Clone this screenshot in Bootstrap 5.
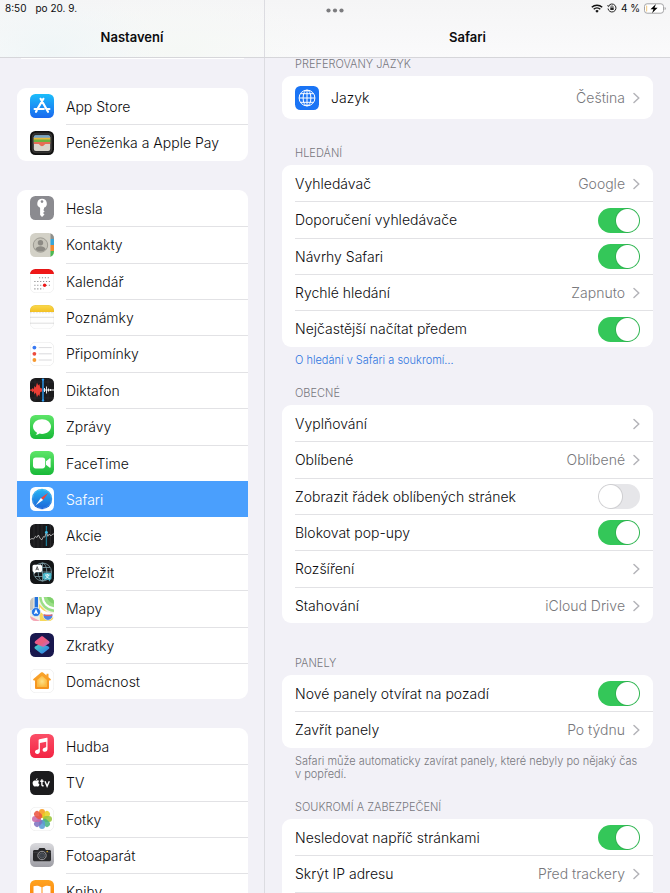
<!DOCTYPE html>
<html lang="cs">
<head>
<meta charset="utf-8">
<meta name="viewport" content="width=device-width, initial-scale=1">
<title>Nastavení</title>
<link href="https://cdn.jsdelivr.net/npm/bootstrap@5.3.0/dist/css/bootstrap.min.css" rel="stylesheet">
<style>
  body { background: #f2f1f7; color: #0c0c0e; font-family: Inter, "Noto Sans", sans-serif; font-size: 14px; line-height: 20px; }
  a { text-decoration: none; }
  .top-bar { height: 58px; background: radial-gradient(ellipse 110px 60px at 50px 50px, #eff6f7, transparent), radial-gradient(ellipse 140px 60px at 180px 50px, #f5f8f5, transparent), linear-gradient(#f5f5f6, #fafafb); border-bottom: 1px solid #d6d6da; }
  .top-bar h1, .top-bar h2 { font-size: 13px; line-height: 20px; font-weight: 600; padding-top: 27px; }
  .status { font-size: 10px; line-height: 16px; z-index: 2; }
  .status-time { margin-left: 5px; }
  .status-date { margin-left: 9px; }
  .side-pane { width: 265px; border-right: 1px solid #dcdce1; }
  .side-scroll { padding: 0 16px 0 17px; }
  .main-scroll { padding: 0 17px; }
  .peek { height: 1px; background: #fff; margin: 0 4px 29px; }
  .set-list { display: grid; grid-auto-rows: 36px 37px 36px 36px 37px; border-radius: 9px; overflow: hidden; background: #fff; font-weight: 300; }
  .side-scroll .set-list { margin-bottom: 29px; }
  .tall-list { grid-auto-rows: 43px; }
  .set-row { display: flex; align-items: center; padding: 0 0 0 13px; border: 0; background: transparent; color: inherit; font-weight: inherit; text-align: left; min-width: 0; }
  .set-row svg.app { width: 24px; height: 24px; flex: none; margin-right: 12px; }
  .row-body { flex: 1; height: 100%; min-width: 0; display: flex; align-items: center; justify-content: space-between; border-top: 1px solid #e2e2e5; padding-right: 13px; white-space: nowrap; }
  .set-row:first-child .row-body { border-top-color: transparent; }
  .set-row.chosen { background: #4a9ffd; color: #fff; }
  .set-row.chosen .row-body, .set-row.chosen + .set-row .row-body { border-top-color: transparent; }
  .row-value { color: #77777b; display: flex; align-items: center; gap: 8px; }
  .row-value svg { width: 7px; height: 12px; fill: none; stroke: #b4b4b9; stroke-width: 1.5; stroke-linecap: round; stroke-linejoin: round; }
  .group-title, .group-note { font-size: 11px; line-height: 13px; color: #77777d; padding: 0 13px; margin: 0; font-weight: 300; }
  .group-title { margin: 28px 0 5px; }
  .main-scroll > .group-title:first-child { margin-top: 0; }
  .group-title.after-list { margin-top: 34px; }
  .group-note { margin-top: 7px; padding-right: 0; }
  .group-note + .group-title { margin-top: 20px; }
  .group-note a { color: #2f76e0; }
  .form-check-input.toggle { float: none; margin: 0; width: 42px; height: 25px; border: 0; border-radius: 13px; background-color: #e6e6e9; background-image: radial-gradient(circle, #fff 11px, rgba(0,0,0,.10) 12px, transparent 13px); background-size: 25px 25px; background-position: left center; background-repeat: no-repeat; }
  .form-check-input.toggle:checked { background-color: #34c759; background-image: radial-gradient(circle, #fff 11px, rgba(0,0,0,.10) 12px, transparent 13px); background-position: right center; }
</style>
<script src="https://cdn.jsdelivr.net/npm/bootstrap@5.3.0/dist/js/bootstrap.bundle.min.js"></script>
</head>
<body class="vh-100 overflow-hidden d-flex flex-column">
<svg width="0" height="0" class="position-absolute" aria-hidden="true">
  <defs>
    <linearGradient id="gStore" x2="0" y2="1"><stop stop-color="#1bbdfb"/><stop offset="1" stop-color="#1a68ef"/></linearGradient>
    <linearGradient id="gGreen" x2="0" y2="1"><stop stop-color="#5de568"/><stop offset="1" stop-color="#18b938"/></linearGradient>
    <linearGradient id="gYellow" x2="0" y2="1"><stop stop-color="#fbd94e"/><stop offset="1" stop-color="#f3c022"/></linearGradient>
    <linearGradient id="gSafari" x2="0" y2="1"><stop stop-color="#28b6f4"/><stop offset="1" stop-color="#1b64d8"/></linearGradient>
    <linearGradient id="gMusic" x2="0" y2="1"><stop stop-color="#fb4f67"/><stop offset="1" stop-color="#f32443"/></linearGradient>
    <linearGradient id="gCam" x2="0" y2="1"><stop stop-color="#dadade"/><stop offset="1" stop-color="#9d9da4"/></linearGradient>
    <linearGradient id="gHome" x2="0" y2="1"><stop stop-color="#f9a52d"/><stop offset="1" stop-color="#f5921d"/></linearGradient>
    <radialGradient id="gGlow"><stop stop-color="#fde28a"/><stop offset="1" stop-color="#fbb940"/></radialGradient>
    <linearGradient id="gTop" x1="0" y1="0" x2="1" y2="1"><stop stop-color="#f0509a"/><stop offset=".55" stop-color="#e9607b"/><stop offset="1" stop-color="#b86be0"/></linearGradient>
    <linearGradient id="gBot" x1="0" y1="0" x2="1" y2="1"><stop stop-color="#4ad9c0"/><stop offset="1" stop-color="#2f74ea"/></linearGradient>
    <linearGradient id="gBooks" x2="0" y2="1"><stop stop-color="#ffa31f"/><stop offset="1" stop-color="#fb7d08"/></linearGradient>
    <clipPath id="cut"><rect width="24" height="24" rx="5.4"/></clipPath>
    <symbol id="chev" viewBox="0 0 7 12"><path d="M1 1.500 5.800 6 1 10.500"/></symbol>
  </defs>
</svg>

<div class="status position-absolute top-0 start-0 w-100 d-flex justify-content-between">
  <div><span class="status-time">8:50</span><span class="status-date">po 20. 9.</span></div>
  <button type="button" class="btn border-0 p-0 position-absolute start-50 translate-middle-x d-flex pt-2" aria-label="Více oken">
    <svg width="18" height="5" viewBox="0 0 18 5" fill="#7c7c7f"><circle cx="2.500" cy="2.500" r="2.100"/><circle cx="9" cy="2.500" r="2.100"/><circle cx="15.500" cy="2.500" r="2.100"/></svg>
  </button>
  <div class="d-flex align-items-center pe-1">
    <svg class="me-1" width="12" height="9" viewBox="0 0 12 9" fill="none" stroke="#111" stroke-width="1.500"><path d="M.8 3.300a7.500 7.500 0 0 1 10.400 0M2.700 5.300a4.700 4.700 0 0 1 6.600 0"/><path d="M6 8.700 4.300 6.900a2.500 2.500 0 0 1 3.400 0z" fill="#111" stroke="none"/></svg>
    <svg class="me-1" width="10" height="10" viewBox="0 0 10 10" fill="none" stroke="#222" stroke-width="1"><path d="M1.500 3A4 4 0 1 1 1 5.500"/><path d="M.3 2.500 1.500 3.700 2.800 2.400"/><path d="M3.900 4.700V3.900a1.100 1.100 0 0 1 2.200 0v.8" stroke-width=".7"/><rect x="3.300" y="4.500" width="3.400" height="2.400" rx=".5" fill="#222" stroke="none"/></svg>
    <span>4 %</span>
    <svg class="ms-1" width="22" height="11" viewBox="0 0 22 11"><rect x=".5" y=".8" width="19" height="9.400" rx="2.600" fill="#fff" stroke="#a4a4a6"/><rect x="2" y="2.400" width="1.200" height="6.200" rx=".5" fill="#f2cf91"/><path d="M20.600 4v3c.8-.2 1.200-.8 1.200-1.500s-.4-1.300-1.200-1.500z" fill="#a4a4a6"/><path d="M12 1 6.500 6.200h3L8 10.200l5.600-5.400h-3.100z" fill="#000"/></svg>
  </div>
</div>

<header class="top-bar d-flex flex-shrink-0 text-center">
  <div class="side-pane flex-shrink-0"><h1 class="m-0">Nastavení</h1></div>
  <div class="flex-grow-1"><h2 class="m-0">Safari</h2></div>
</header>

<div class="d-flex flex-grow-1 overflow-hidden">
  <nav class="side-pane side-scroll flex-shrink-0 overflow-hidden" aria-label="Nastavení">
    <div class="peek"></div>
    <div class="set-list">
      <a class="set-row" href="#"><svg class="app" viewBox="0 0 24 24"><rect width="24" height="24" rx="5.400" fill="url(#gStore)"/><g stroke="#fff" stroke-width="2.200" stroke-linecap="round"><path d="M13.400 4.800 7.900 14.200M10.600 4.800l7.400 13M4.600 15h9.200M16.800 15h2.600M6.700 16.600l-.7 1.200"/></g></svg><span class="row-body">App Store</span></a>
      <a class="set-row" href="#"><svg class="app" viewBox="0 0 24 24"><rect width="24" height="24" rx="5.400" fill="#111"/><rect x="2.200" y="2.200" width="19.600" height="19.600" rx="3.600" fill="#2a2a2a" stroke="#55504a" stroke-width=".5"/><rect x="3.800" y="4.500" width="16.400" height="15.500" rx="2" fill="#d9d5cb"/><path d="M3.800 7.200V6a1.800 1.800 0 0 1 1.800-1.800h12.800A1.800 1.800 0 0 1 20.200 6v1.200z" fill="#75a5c8"/><path d="M3.800 6.700h16.400v2.500H3.800z" fill="#e8b63c"/><path d="M3.800 8.400h16.400v3H3.800z" fill="#6bb33f"/><path d="M3.800 11h16.400v1.900H16c-.9 0-1.300.5-1.800 1.100-.5.700-1.200 1.200-2.200 1.200s-1.700-.5-2.200-1.200c-.5-.6-.9-1.100-1.800-1.100H3.800z" fill="#e66d55"/></svg><span class="row-body">Peněženka a Apple Pay</span></a>
    </div>

    <div class="set-list">
      <a class="set-row" href="#"><svg class="app" viewBox="0 0 24 24"><rect width="24" height="24" rx="5.400" fill="#8b8b90"/><path d="M12 2.800a4.700 4.700 0 0 0-1.900 9v7.300l1.900 2 2.500-2.500-1.500-1.500 1.600-1.600-1.400-1.400.8-.9v-1.400A4.700 4.700 0 0 0 12 2.800z" fill="#fff"/><circle cx="12" cy="5.600" r="1.300" fill="#8b8b90"/></svg><span class="row-body">Hesla</span></a>
      <a class="set-row" href="#"><svg class="app" viewBox="0 0 24 24"><g clip-path="url(#cut)"><path d="M0 0h24v24H0z" fill="#d3d1c7"/><path d="M20.500 0H24v6h-3.500z" fill="#8f8f8b"/><path d="M20.500 6H24v6h-3.500z" fill="#38a5d8"/><path d="M20.500 12H24v6h-3.500z" fill="#f18a31"/><path d="M20.500 18H24v6h-3.500z" fill="#4cb953"/></g><circle cx="10.500" cy="12" r="7.200" fill="#c6c4ba" stroke="#97958d" stroke-width=".9"/><circle cx="10.500" cy="9.700" r="2.700" fill="#8c8a84"/><path d="M5.300 16.300c1-2.300 3-3 5.200-3s4.200.7 5.200 3a7 7 0 0 1-10.400 0z" fill="#8c8a84"/></svg><span class="row-body">Kontakty</span></a>
      <a class="set-row" href="#"><svg class="app" viewBox="0 0 24 24"><g clip-path="url(#cut)"><path d="M0 0h24v24H0z" fill="#fff"/><path d="M0 0h24v5H0z" fill="#ef1717"/></g><rect x=".3" y=".3" width="23.400" height="23.400" rx="5.200" fill="none" stroke="#000" stroke-opacity=".09" stroke-width=".6"/><g stroke="#8e8e90" stroke-width="1.100" stroke-dasharray="1.200 1.700"><path d="M9 8.800h11M4.300 12.500h16M4.300 16.200h16M4.300 19.900h9"/></g><circle cx="14.600" cy="16.200" r="1.700" fill="#ef1717"/></svg><span class="row-body">Kalendář</span></a>
      <a class="set-row" href="#"><svg class="app" viewBox="0 0 24 24"><g clip-path="url(#cut)"><path d="M0 0h24v24H0z" fill="#fefefe"/><path d="M0 0h24v7H0z" fill="url(#gYellow)"/><path d="M0 12.300h24M0 18.200h24" stroke="#d6d6d6" stroke-width=".8"/><path d="M0 7.700h24" stroke="#bbb" stroke-width=".7" stroke-dasharray=".6 .9"/></g><rect x=".3" y=".3" width="23.400" height="23.400" rx="5.200" fill="none" stroke="#000" stroke-opacity=".08" stroke-width=".6"/></svg><span class="row-body">Poznámky</span></a>
      <a class="set-row" href="#"><svg class="app" viewBox="0 0 24 24"><rect x=".3" y=".3" width="23.400" height="23.400" rx="5.200" fill="#fff" stroke="#000" stroke-opacity=".1" stroke-width=".6"/><path d="M8.700 5.600h13M8.700 11.800h13M8.700 18h13" stroke="#d0d0d3" stroke-width=".8"/><circle cx="4.400" cy="5.600" r="1.900" fill="#3879f2"/><circle cx="4.400" cy="11.800" r="1.900" fill="#ec4a3c"/><circle cx="4.400" cy="18" r="1.900" fill="#f6982f"/></svg><span class="row-body">Připomínky</span></a>
      <a class="set-row" href="#"><svg class="app" viewBox="0 0 24 24"><g clip-path="url(#cut)"><path d="M0 0h24v24H0z" fill="#1b1b1d"/><path d="M0 4h24M0 20h24M5 0v24M18 0v24" stroke="#303032" stroke-width=".6"/><path d="M0 11.500h1.500l1-1.500 1 1.500L4.600 8l1.200 1.500L7 4.500l1.200 3L9.300 6l1 4 1.700.5v3l-1.700.5-1 4.500-1.100-2L7 19.500l-1.200-5-1.200 2-1.100-3.500-1 1.500-1-1.800H0z" fill="#ea3e35"/><path d="M13 12h11" stroke="#fff"/><path d="M14.500 10v4M16.500 8.500v7M18.500 10.500v3M20.500 11v2" stroke="#fff" stroke-width=".9"/><path d="M13 1.500v21" stroke="#2d9df2" stroke-width="1.400"/><circle cx="13" cy="1.600" r="1.200" fill="#2d9df2"/><circle cx="13" cy="22.400" r="1.200" fill="#2d9df2"/></g></svg><span class="row-body">Diktafon</span></a>
      <a class="set-row" href="#"><svg class="app" viewBox="0 0 24 24"><rect width="24" height="24" rx="5.400" fill="url(#gGreen)"/><path d="M12 4.200c-5 0-9 3.200-9 7.300 0 2.600 1.600 4.900 4 6.200-.1.900-.6 1.700-1.400 2.300 1.500 0 2.900-.6 3.900-1.400.8.200 1.600.3 2.500.3 5 0 9-3.300 9-7.400s-4-7.300-9-7.300z" fill="#fff"/></svg><span class="row-body">Zprávy</span></a>
      <a class="set-row" href="#"><svg class="app" viewBox="0 0 24 24"><rect width="24" height="24" rx="5.400" fill="url(#gGreen)"/><rect x="3" y="6.600" width="12.200" height="10.800" rx="2.800" fill="#fff"/><path d="m16 10.300 3.500-2.800c.6-.4 1.100-.1 1.100.5v8c0 .6-.5.900-1.100.5L16 13.700z" fill="#fff"/></svg><span class="row-body">FaceTime</span></a>
      <a class="set-row chosen" href="#" aria-current="page"><svg class="app" viewBox="0 0 24 24"><rect width="24" height="24" rx="5.400" fill="#fff"/><circle cx="12" cy="12" r="10.200" fill="url(#gSafari)"/><circle cx="12" cy="12" r="9.200" fill="none" stroke="#fff" stroke-opacity=".6" stroke-width="1" stroke-dasharray=".3 1"/><path d="M18.300 5.700 10.900 10.900l2.200 2.200z" fill="#f34238"/><path d="m5.700 18.300 7.400-5.200-2.200-2.200z" fill="#fff"/></svg><span class="row-body">Safari</span></a>
      <a class="set-row" href="#"><svg class="app" viewBox="0 0 24 24"><g clip-path="url(#cut)"><path d="M0 0h24v24H0z" fill="#19191b"/><path d="M4 0v24M8 0v24M12 0v24M20.500 0v24" stroke="#333336" stroke-width=".6"/><path d="M16.400 2v20" stroke="#1d7994" stroke-width="1.300"/><path d="M0 15.500l2-1 1.500.6 2-2.800 1.400 1.200L8.400 11l1.800 3.600 1.700 1.200 1.600-3.200 1.300.5L16.400 8l1.400 4.300 1.500-2.300 1.500 2 1.300-1.500L24 9.800" fill="none" stroke="#ccc" stroke-width=".8"/><circle cx="16.400" cy="8.300" r="1.400" fill="#3cc0ec"/></g></svg><span class="row-body">Akcie</span></a>
      <a class="set-row" href="#"><svg class="app" viewBox="0 0 24 24"><rect width="24" height="24" rx="5.400" fill="#131517"/><g fill="none" stroke="#7fa0a8" stroke-width=".8"><circle cx="12.500" cy="12" r="9"/><ellipse cx="12.500" cy="12" rx="4.300" ry="9"/><path d="M3.500 12h18M12.500 3v18M5 7.500h15M5 16.500h15"/></g><path d="M4 4.800h6.500A1.500 1.500 0 0 1 12 6.300v4.200a1.500 1.500 0 0 1-1.500 1.500H6l-2 2v-2a1.500 1.500 0 0 1-1.500-1.500V6.300A1.500 1.500 0 0 1 4 4.800z" fill="#fff"/><path d="M5.800 10.300 7.200 6.600l1.400 3.700M6.300 9.200h1.800" fill="none" stroke="#333" stroke-width=".7"/><path d="M14.500 12.800H20a1.500 1.500 0 0 1 1.500 1.500v4A1.500 1.500 0 0 1 20 19.800v1.700l-1.800-1.700h-3.700a1.500 1.500 0 0 1-1.500-1.500v-4a1.500 1.500 0 0 1 1.500-1.500z" fill="#49b5c8"/><path d="M15 15h4.600M17.300 14v1M15.300 18.500c1.800-.7 2.800-1.800 3.200-3.500M16 15.500c.7 1.500 1.700 2.500 3.500 3" fill="none" stroke="#fff" stroke-width=".8"/></svg><span class="row-body">Přeložit</span></a>
      <a class="set-row" href="#"><svg class="app" viewBox="0 0 24 24"><g clip-path="url(#cut)"><path d="M0 0h24v24H0z" fill="#f2efe2"/><path d="M9 0h15v15C15 14 10 8 9 0z" fill="#9adf86"/><path d="M12.500 0c.8 6 5 10.500 11.500 11.300" fill="none" stroke="#fff" stroke-width="2.200"/><path d="M17 0c1 3.700 3.500 6 7 6.800V0z" fill="#7fd06c"/><path d="M0 0h3.500v13H0z" fill="#c9c7be"/><path d="M0 19 10 24H0z" fill="#f5a6b6"/><path d="M9 7 24 22v2H10z" fill="#f6d859"/><path d="M10 10c3 4 8 6 14 6.500V20c-6 0-11-2-14-6z" fill="#fff"/><path d="M6.300 0v13" stroke="#2573dc" stroke-width="3.400"/><circle cx="6" cy="15" r="4.500" fill="#2476e6" stroke="#fff" stroke-width=".6"/><path d="m6 11.700 2.300 5.600L6 16.200l-2.300 1.100z" fill="#fff"/><path d="M13.500 17c3 .7 6 .7 9 0 .9 3-.6 5.200-4.500 6.400-4-1.200-5.400-3.400-4.500-6.400z" fill="#4d83e2" stroke="#fff" stroke-width=".6"/><path d="M13.700 17.300c3 .7 5.700.7 8.600 0v1.500c-3 .6-5.700.6-8.600 0z" fill="#e9605f"/></g></svg><span class="row-body">Mapy</span></a>
      <a class="set-row" href="#"><svg class="app" viewBox="0 0 24 24"><rect width="24" height="24" rx="5.400" fill="#19184e"/><path d="m5.100 13.500 5.700-3.200 7.600 3.100c1.200.6 1.200 2 .2 2.700l-5.400 4.100c-.8.600-1.700.6-2.500 0l-5.400-4.100c-.9-.8-1.100-1.900-.2-2.600z" fill="url(#gBot)"/><path d="m18.900 10.500-5.700 3.400-7.600-3.200c-1.200-.6-1.200-2-.2-2.700l5.400-4.200c.8-.6 1.700-.6 2.500 0L18.700 8c.9.700 1.100 1.800.2 2.500z" fill="url(#gTop)"/></svg><span class="row-body">Zkratky</span></a>
      <a class="set-row" href="#"><svg class="app" viewBox="0 0 24 24"><rect x=".3" y=".3" width="23.400" height="23.400" rx="5.200" fill="#fff" stroke="#000" stroke-opacity=".09" stroke-width=".6"/><path d="M16.500 4.800h2v4l-2-1.700zM12 3.200c.4 0 .7.200 1 .4l7.600 6.500c.6.600.2 1.500-.6 1.500h-1v7.200c0 .8-.5 1.200-1.200 1.200H6.200c-.7 0-1.200-.4-1.200-1.200v-7.200H4c-.8 0-1.200-.9-.6-1.500L11 3.600c.3-.2.600-.4 1-.4z" fill="url(#gHome)"/><path d="m12 6.800 5 4.300V17c0 .6-.3 1-1 1H8c-.7 0-1-.4-1-1v-5.900z" fill="url(#gGlow)"/></svg><span class="row-body">Domácnost</span></a>
    </div>

    <div class="set-list">
      <a class="set-row" href="#"><svg class="app" viewBox="0 0 24 24"><rect width="24" height="24" rx="5.400" fill="url(#gMusic)"/><path d="M17.500 4.200v10.900c0 1.600-1 2.700-2.600 2.700-1.400 0-2.300-.8-2.300-1.900 0-1.200.8-1.900 2.100-2.200.9-.2 1.500-.4 1.500-1.200V7.700L9.900 9v8.200c0 1.600-1 2.700-2.600 2.700-1.400 0-2.300-.8-2.300-1.900 0-1.200.8-1.900 2.100-2.200.9-.2 1.500-.4 1.500-1.200V6.300c0-.6.300-.9.900-1l7.100-1.500c.5-.1.900 0 .9.400z" fill="#fff"/></svg><span class="row-body">Hudba</span></a>
      <a class="set-row" href="#"><svg class="app" viewBox="0 0 24 24"><rect width="24" height="24" rx="5.400" fill="#1b1b1d"/><path d="M7.600 7.200c.1 1-.8 1.900-1.700 1.900-.1-1 .8-1.800 1.700-1.900zM5.900 9.600c.5 0 1-.4 1.700-.4.700 0 1.300.4 1.600.8-1.300.9-1.100 2.800.3 3.400-.3.900-1 2.200-1.900 2.200-.6 0-.8-.4-1.500-.4s-1 .4-1.500.4c-1 0-2-1.900-2-3.500 0-1.700 1-2.600 2-2.600.5 0 .9.100 1.300.1z" fill="#fff"/><path d="M11.900 8.300v5.300c0 1 .4 1.300 1.700 1.200M10.200 10.300h3.400M15 10.200l2.100 5 2.200-5" fill="none" stroke="#fff" stroke-width="1.400"/></svg><span class="row-body">TV</span></a>
      <a class="set-row" href="#"><svg class="app" viewBox="0 0 24 24"><rect x=".3" y=".3" width="23.400" height="23.400" rx="5.200" fill="#fff" stroke="#000" stroke-opacity=".09" stroke-width=".6"/><g fill-opacity=".88"><rect x="9" y="2" width="6" height="9" rx="3" fill="#f79a1e"/><rect x="9" y="2" width="6" height="9" rx="3" fill="#e6cf24" transform="rotate(45 12 12)"/><rect x="9" y="2" width="6" height="9" rx="3" fill="#9ac63c" transform="rotate(90 12 12)"/><rect x="9" y="2" width="6" height="9" rx="3" fill="#4cb583" transform="rotate(135 12 12)"/><rect x="9" y="2" width="6" height="9" rx="3" fill="#5b9bd6" transform="rotate(180 12 12)"/><rect x="9" y="2" width="6" height="9" rx="3" fill="#7f72c0" transform="rotate(225 12 12)"/><rect x="9" y="2" width="6" height="9" rx="3" fill="#c66aa8" transform="rotate(270 12 12)"/><rect x="9" y="2" width="6" height="9" rx="3" fill="#ec5540" transform="rotate(315 12 12)"/></g></svg><span class="row-body">Fotky</span></a>
      <a class="set-row" href="#"><svg class="app" viewBox="0 0 24 24"><rect width="24" height="24" rx="5.400" fill="url(#gCam)"/><path d="M4.500 7h3.600l1-1.600c.2-.3.500-.4.800-.4h4.200c.3 0 .6.100.8.400l1 1.600h3.600c.9 0 1.500.6 1.500 1.500v8.200c0 .9-.6 1.500-1.500 1.500h-15c-.9 0-1.500-.6-1.500-1.500V8.500C3 7.600 3.600 7 4.500 7z" fill="#29292b"/><path d="M3 9.300h18" stroke="#59595c" stroke-width=".5"/><circle cx="12" cy="12.500" r="4.200" fill="#29292b" stroke="#b4b4b8" stroke-width=".8"/><circle cx="12" cy="12.500" r="2.700" fill="#3e434b" stroke="#777a80" stroke-width=".5"/><circle cx="17.200" cy="8.500" r=".7" fill="#f5c02b"/></svg><span class="row-body">Fotoaparát</span></a>
      <a class="set-row" href="#"><svg class="app" viewBox="0 0 24 24"><rect width="24" height="24" rx="5.400" fill="url(#gBooks)"/><path d="M11.500 7.300C9.500 5.600 6 5.300 3.500 6.300v11.600c2.600-.8 5.800-.6 8 .9zM12.500 7.300c2-1.700 5.500-2 8-1v11.600c-2.600-.8-5.800-.6-8 .9z" fill="#fff"/></svg><span class="row-body">Knihy</span></a>
    </div>
  </nav>

  <main class="main-scroll flex-grow-1 overflow-hidden">
    <h3 class="group-title">PREFEROVANÝ JAZYK</h3>
    <div class="set-list tall-list">
      <button type="button" class="set-row"><svg class="app" viewBox="0 0 24 24"><rect width="24" height="24" rx="5.400" fill="#1a74f5"/><g fill="none" stroke="#fff" stroke-width="1"><circle cx="12" cy="12" r="7.900"/><ellipse cx="12" cy="12" rx="3.900" ry="7.900"/><path d="M4.100 12h15.800M12 4.100v15.800M5.600 7.700h12.800M5.600 16.300h12.800"/></g></svg><span class="row-body">Jazyk<span class="row-value">Čeština<svg><use href="#chev"/></svg></span></span></button>
    </div>

    <h3 class="group-title">HLEDÁNÍ</h3>
    <div class="set-list">
      <button type="button" class="set-row"><span class="row-body">Vyhledávač<span class="row-value">Google<svg><use href="#chev"/></svg></span></span></button>
      <div class="set-row"><div class="row-body"><label for="t1">Doporučení vyhledávače</label><input class="form-check-input toggle" type="checkbox" role="switch" id="t1" checked></div></div>
      <div class="set-row"><div class="row-body"><label for="t2">Návrhy Safari</label><input class="form-check-input toggle" type="checkbox" role="switch" id="t2" checked></div></div>
      <button type="button" class="set-row"><span class="row-body">Rychlé hledání<span class="row-value">Zapnuto<svg><use href="#chev"/></svg></span></span></button>
      <div class="set-row"><div class="row-body"><label for="t3">Nejčastější načítat předem</label><input class="form-check-input toggle" type="checkbox" role="switch" id="t3" checked></div></div>
    </div>
    <p class="group-note"><a href="#">O hledání v Safari a soukromí…</a></p>

    <h3 class="group-title">OBECNÉ</h3>
    <div class="set-list">
      <button type="button" class="set-row"><span class="row-body">Vyplňování<span class="row-value"><svg><use href="#chev"/></svg></span></span></button>
      <button type="button" class="set-row"><span class="row-body">Oblíbené<span class="row-value">Oblíbené<svg><use href="#chev"/></svg></span></span></button>
      <div class="set-row"><div class="row-body"><label for="t4">Zobrazit řádek oblíbených stránek</label><input class="form-check-input toggle" type="checkbox" role="switch" id="t4"></div></div>
      <div class="set-row"><div class="row-body"><label for="t5">Blokovat pop-upy</label><input class="form-check-input toggle" type="checkbox" role="switch" id="t5" checked></div></div>
      <button type="button" class="set-row"><span class="row-body">Rozšíření<span class="row-value"><svg><use href="#chev"/></svg></span></span></button>
      <button type="button" class="set-row"><span class="row-body">Stahování<span class="row-value">iCloud Drive<svg><use href="#chev"/></svg></span></span></button>
    </div>

    <h3 class="group-title after-list">PANELY</h3>
    <div class="set-list">
      <div class="set-row"><div class="row-body"><label for="t6">Nové panely otvírat na pozadí</label><input class="form-check-input toggle" type="checkbox" role="switch" id="t6" checked></div></div>
      <button type="button" class="set-row"><span class="row-body">Zavřít panely<span class="row-value">Po týdnu<svg><use href="#chev"/></svg></span></span></button>
    </div>
    <p class="group-note">Safari může automaticky zavírat panely, které nebyly po nějaký čas<br>v&nbsp;popředí.</p>

    <h3 class="group-title">SOUKROMÍ A ZABEZPEČENÍ</h3>
    <div class="set-list">
      <div class="set-row"><div class="row-body"><label for="t7">Nesledovat napříč stránkami</label><input class="form-check-input toggle" type="checkbox" role="switch" id="t7" checked></div></div>
      <button type="button" class="set-row"><span class="row-body">Skrýt IP adresu<span class="row-value">Před trackery<svg><use href="#chev"/></svg></span></span></button>
      <div class="set-row"><div class="row-body"></div></div>
    </div>
  </main>
</div>
</body>
</html>
